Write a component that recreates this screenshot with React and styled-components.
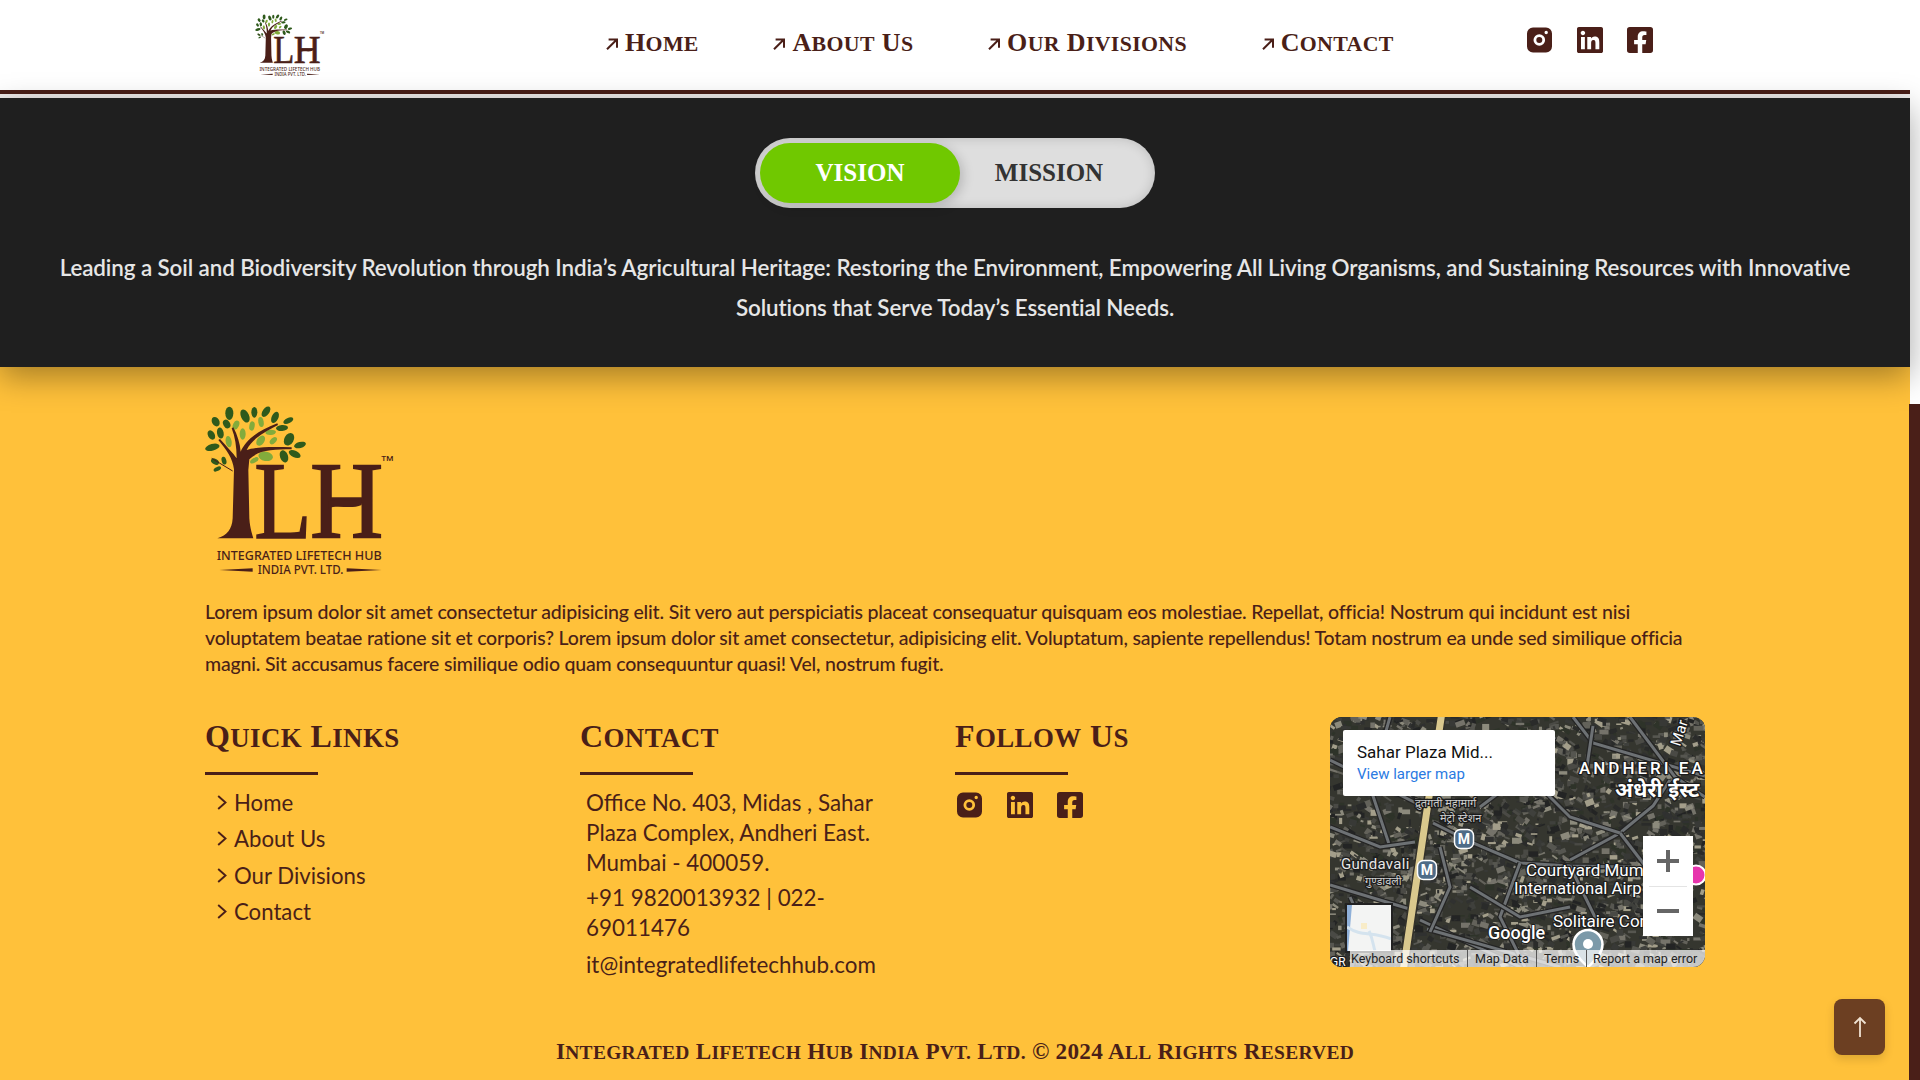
import React from "react";
import styled, { createGlobalStyle } from "styled-components";

const BROWN = "#4a1f18";
const YELLOW = "#ffc13a";
const HEAD = `"Liberation Serif", "Times New Roman", serif`;
const BODY = `Lato, "Noto Sans", sans-serif`;
const ROBOTO = `Roboto, "Liberation Sans", sans-serif`;
const DEVA = `"Noto Sans Devanagari", "Noto Sans", "DejaVu Sans", sans-serif`;

const Global = createGlobalStyle`
  html, body { margin: 0; padding: 0; height: 1080px; overflow: hidden; background: #fff; }
  * { box-sizing: border-box; }
`;

const Page = styled.div`
  position: relative;
  display: flex;
  width: 1920px;
  height: 1080px;
  overflow: hidden;
`;
const Main = styled.div`
  width: 1910px;
  height: 1080px;
  display: flex;
  flex-direction: column;
`;
const Rail = styled.aside`
  position: relative;
  width: 10px;
  background: #fff;
`;
const Thumb = styled.div`
  position: absolute;
  left: -1px;
  right: 0;
  top: 404px;
  bottom: 0;
  background: ${BROWN};
`;
const Header = styled.header`
  display: flex;
  align-items: flex-start;
  flex: none;
  height: 98px;
  padding-left: 255px;
  background: #fff;
  border-bottom: 4px solid #eeeae9;
  box-shadow: inset 0 -4px 0 ${BROWN};
`;
const HeaderLogo = styled.div`
  width: 351px;
  padding-top: 14px;
`;
const Nav = styled.nav`
  display: flex;
  gap: 74.7px;
  width: 921px;
  padding-top: 26px;
`;
const NavItem = styled.a`
  display: flex;
  align-items: center;
  gap: 7px;
  font-family: ${HEAD};
  font-weight: 700;
  font-size: 26px;
  line-height: 34px;
  letter-spacing: 0.35px;
  color: ${BROWN};
`;
const Low = styled.span`
  font-size: 0.84em;
  text-transform: uppercase;
`;
const Socials = styled.div`
  display: flex;
  gap: ${(p) => p.$gap}px;
  color: ${BROWN};
`;
const HeaderSocials = styled(Socials)`
  padding-top: 27px;
`;
const Band = styled.section`
  flex: none;
  height: 269px;
  padding: 40px 50px 0;
  background: #1f1f1f;
  position: relative;
  z-index: 1;
  box-shadow: 0 10px 30px rgba(0, 0, 0, 0.35);
`;
const Toggle = styled.div`
  display: flex;
  align-items: center;
  width: 400px;
  height: 70px;
  margin: 0 auto;
  padding: 5px;
  border-radius: 35px;
  background: #dedede;
  box-shadow: inset 0 0 12px rgba(0, 0, 0, 0.16);
`;
const ToggleOption = styled.div`
  width: ${(p) => (p.$active ? 200 : 178)}px;
  height: 60px;
  border-radius: 30px;
  display: flex;
  align-items: center;
  justify-content: center;
  font-family: ${HEAD};
  font-weight: 700;
  font-size: 25px;
  color: ${(p) => (p.$active ? "#fff" : "#333")};
  background: ${(p) => (p.$active ? "#70c800" : "transparent")};
  box-shadow: ${(p) => (p.$active ? "3px 3px 12px rgba(0,0,0,.18)" : "none")};
`;
const Statement = styled.p`
  margin: 40px 0 0;
  text-align: center;
  font-family: ${BODY};
  font-weight: 600;
  font-size: 22.4px;
  letter-spacing: -0.1px;
  line-height: 40px;
  color: #e6e6e6;
`;
const Footer = styled.footer`
  flex: 1;
  min-height: 0;
  padding: 38px 205px 0;
  background: ${YELLOW};
  color: ${BROWN};
  font-family: ${BODY};
`;
const LogoFrame = styled.div`
  display: block;
  line-height: 0;
`;
const About = styled.p`
  margin: 22px 0 0;
  font-size: 19.5px;
  letter-spacing: -0.19px;
  line-height: 26px;
  font-weight: 500;
`;
const Columns = styled.div`
  display: grid;
  grid-template-columns: repeat(4, 375px);
  margin-top: 40px;
`;
const Column = styled.div`
  min-width: 0;
`;
const ColTitle = styled.h3`
  margin: 0;
  height: 58px;
  font-family: ${HEAD};
  font-weight: 700;
  font-size: 32px;
  line-height: 38px;
  letter-spacing: 0.4px;
  position: relative;
  &::after {
    content: "";
    position: absolute;
    left: 0;
    top: 55px;
    width: 113px;
    height: 3px;
    background: ${BROWN};
  }
`;
const LinkList = styled.ul`
  list-style: none;
  margin: 9px 0 0;
  padding: 0 0 0 12px;
`;
const LinkRow = styled.li`
  display: flex;
  align-items: center;
  gap: 7px;
  height: 36.5px;
  font-size: 22.2px;
`;
const ContactBody = styled.div`
  width: 300px;
  margin: 13px 0 0 6px;
  font-size: 22.4px;
  line-height: 30px;
`;
const ContactPara = styled.p`
  margin: 0 0 ${(p) => p.$gap}px;
`;
const FollowIcons = styled(Socials)`
  margin: 17px 0 0 2px;
`;
const MapBox = styled.div`
  position: relative;
  width: 375px;
  height: 250px;
  overflow: hidden;
  border-radius: 12px;
  background: #3b3b38;
  font-family: ${ROBOTO};
`;
const MapArt = styled.svg`
  display: block;
`;
const InfoCard = styled.div`
  position: absolute;
  left: 13px;
  top: 13px;
  width: 212px;
  height: 66px;
  padding: 12px 0 0 14px;
  background: #fff;
  border-radius: 2px;
`;
const InfoTitle = styled.div`
  font-size: 17px;
  line-height: 21px;
  color: #111;
`;
const InfoLink = styled.div`
  margin-top: 2px;
  font-size: 15px;
  line-height: 18px;
  color: #2a7ae2;
`;
const ZoomCtl = styled.div`
  position: absolute;
  left: 313px;
  top: 119px;
  width: 50px;
  height: 100px;
  background: #fff;
  display: flex;
  flex-direction: column;
`;
const ZoomBtn = styled.div`
  flex: 1;
  display: flex;
  align-items: center;
  justify-content: center;
  & + & {
    position: relative;
    &::before {
      content: "";
      position: absolute;
      top: 0;
      left: 6px;
      right: 6px;
      height: 1px;
      background: #e4e4e4;
    }
  }
`;
const Peg = styled.div`
  position: absolute;
  left: 15px;
  top: 186px;
  width: 48px;
  height: 50px;
  border: 2px solid #222;
  background: #f2f3f2;
  overflow: hidden;
`;
const Attribution = styled.div`
  position: absolute;
  left: 20px;
  right: 0;
  bottom: 0;
  height: 17px;
  display: flex;
  background: rgba(255, 255, 255, 0.72);
  font-size: 12.5px;
  line-height: 17px;
  color: #222;
`;
const AttrCell = styled.span`
  flex: none;
  width: ${(p) => p.$w}px;
  padding-left: ${(p) => p.$pad}px;
  white-space: nowrap;
  overflow: hidden;
  border-right: ${(p) => (p.$last ? "none" : "1px solid #555")};
`;
const Copyright = styled.div`
  margin: 56px -205px 0;
  text-align: center;
  font-family: ${HEAD};
  font-weight: 700;
  font-size: 23.2px;
  line-height: 30px;
  letter-spacing: 0.28px;
`;
const TopButton = styled.button`
  position: absolute;
  left: 1834px;
  top: 999px;
  width: 51px;
  height: 56px;
  padding: 0;
  border: 0;
  border-radius: 8px;
  background: #6c3f22;
  box-shadow: 0 4px 10px rgba(0, 0, 0, 0.14);
  display: flex;
  align-items: center;
  justify-content: center;
`;

/* small caps in the manner of the reference's display face */
const Caps = ({ text }) => (
  <span>
    {text.split(" ").map((word, i) => (
      <React.Fragment key={i}>
        {i > 0 ? " " : ""}
        {/^[A-Za-z]/.test(word) ? (
          <>
            {word[0]}
            <Low>{word.slice(1)}</Low>
          </>
        ) : (
          word
        )}
      </React.Fragment>
    ))}
  </span>
);

/* ---------- icons ---------- */
const Insta = () => (
  <svg width="26" height="26" viewBox="0 0 26 26">
    <path
      fill="currentColor"
      fillRule="evenodd"
      d="M6 0.5h13a6 6 0 0 1 6 6v13a6 6 0 0 1-6 6H6a6 6 0 0 1-6-6v-13a6 6 0 0 1 6-6zM12.3 7.2a5.8 5.8 0 1 0 0 11.6a5.8 5.8 0 1 0 0-11.6zM12.3 10a3 3 0 1 1 0 6a3 3 0 1 1 0-6zM19.2 3.8a1.7 1.7 0 1 0 0 3.4a1.7 1.7 0 1 0 0-3.4z"
    />
  </svg>
);
const Linked = () => (
  <svg width="26" height="26" viewBox="0 32 448 448">
    <path
      fill="currentColor"
      d="M416 32H31.9C14.3 32 0 46.5 0 64.3v383.4C0 465.5 14.3 480 31.9 480H416c17.6 0 32-14.5 32-32.3V64.3c0-17.8-14.4-32.3-32-32.3zM135.4 416H69V202.2h66.5V416zm-33.2-243c-21.3 0-38.5-17.3-38.5-38.5S80.9 96 102.2 96c21.2 0 38.5 17.3 38.5 38.5 0 21.3-17.2 38.5-38.5 38.5zm282.1 243h-66.4V312c0-24.8-.5-56.7-34.5-56.7-34.6 0-39.9 27-39.9 54.9V416h-66.4V202.2h63.7v29.2h.9c8.9-16.8 30.6-34.5 62.9-34.5 67.2 0 79.7 44.3 79.7 101.9V416z"
    />
  </svg>
);
const Face = () => (
  <svg width="26" height="26" viewBox="0 32 448 448">
    <path
      fill="currentColor"
      d="M400 32H48A48 48 0 0 0 0 80v352a48 48 0 0 0 48 48h137.25V327.69h-63V256h63v-54.64c0-62.15 37-96.48 93.67-96.48 27.14 0 55.52 4.84 55.52 4.84v61h-31.27c-30.81 0-40.42 19.12-40.42 38.73V256h68.78l-11 71.69h-57.78V480H400a48 48 0 0 0 48-48V80a48 48 0 0 0-48-48z"
    />
  </svg>
);
const NavArrow = () => (
  <svg width="12" height="12" viewBox="0 0 12 12" fill="none" stroke={BROWN} strokeWidth="2">
    <path d="M1 11.3L10.6 1.7M2.6 1.4h8.4v8.4" />
  </svg>
);
const Chevron = () => (
  <svg width="10" height="15" viewBox="0 0 10 15" fill="none" stroke={BROWN} strokeWidth="1.9">
    <path d="M1.2 1l7.3 6.5L1.2 14" />
  </svg>
);

/* ---------- logo ---------- */
const DARK = [
  [118, 70, 12, 20, 0], [77, 95, 11, 15, -30], [110, 102, 10, 14, -30], [165, 78, 12, 21, -25],
  [193, 67, 9, 16, 0], [228, 65, 10, 18, 35], [255, 82, 10, 18, 25], [295, 92, 8, 16, 65],
  [276, 114, 9, 18, 85], [64, 135, 10, 15, -30], [91, 129, 10, 17, -10], [67, 172, 10, 22, 75],
  [297, 148, 14, 20, 30], [330, 165, 9, 18, 75], [314, 192, 10, 19, 115], [282, 199, 12, 19, -20],
  [75, 215, 8, 13, -60], [102, 212, 7, 12, -15], [82, 237, 6, 12, 65],
];
const LIGHT = [
  [138, 105, 9, 14, 25], [186, 108, 8, 14, 10], [213, 96, 8, 15, -10], [158, 132, 9, 17, 0],
  [116, 155, 9, 17, -10], [242, 127, 8, 16, 85], [212, 152, 11, 17, 35], [250, 152, 8, 13, 45],
  [227, 199, 14, 22, 100], [193, 211, 7, 14, 60],
];
const Leaves = ({ list, color }) =>
  list.map(([cx, cy, rx, ry, a], i) => (
    <ellipse key={i} cx={cx} cy={cy} rx={rx} ry={ry} fill={color} transform={`rotate(${a} ${cx} ${cy})`} />
  ));

const Logo = ({ width, height }) => (
  <svg width={width} height={height} viewBox="45 45 570 516">
    <Leaves list={DARK} color="#2f5a1c" />
    <Leaves list={LIGHT} color="#82ab3c" />
    <path
      fill={BROWN}
      d="M82 445C112 436 126 418 128 385L132 238C128 205 110 180 85 150L90 147C112 172 130 190 140 205C140 170 135 140 125 115L130 112C142 135 150 160 152 185C165 155 195 125 262 100L264 105C215 130 185 150 170 180C195 170 250 170 305 172L305 178C250 178 205 180 178 208L175 240L178 385C180 418 188 436 190 445Z"
    />
    <path stroke={BROWN} strokeWidth="3" fill="none" d="M65 205L128 243" />
    <g stroke={BROWN} strokeWidth="5" fill={BROWN}>
      <text x="193" y="445" textLength="172" lengthAdjust="spacingAndGlyphs" fontFamily={HEAD} fontSize="328">L</text>
      <text x="360" y="445" textLength="220" lengthAdjust="spacingAndGlyphs" fontFamily={HEAD} fontSize="328">H</text>
    </g>
    <path fill={BROWN} d="M415 335C445 322 480 342 515 325V345C480 360 445 342 415 355Z" />
    <text x="574" y="212" textLength="36" lengthAdjust="spacingAndGlyphs" fontFamily={ROBOTO} fontWeight="500" fontSize="22" fill={BROWN}>TM</text>
    <text x="80" y="509" textLength="495" lengthAdjust="spacingAndGlyphs" fontFamily={`"Noto Sans", sans-serif`} fontWeight="500" fontSize="38" fill={BROWN}>INTEGRATED LIFETECH HUB</text>
    <text x="203" y="553" textLength="257" lengthAdjust="spacingAndGlyphs" fontFamily={`"Noto Sans", sans-serif`} fontWeight="500" fontSize="38" fill={BROWN}>INDIA PVT. LTD.</text>
    <path fill={BROWN} d="M88 540L188 535V545ZM575 540L470 535V545Z" />
  </svg>
);

/* ---------- map drawing ---------- */
const mulberry = (seed) => () => {
  seed = (seed + 0x6d2b79f5) | 0;
  let t = Math.imul(seed ^ (seed >>> 15), 1 | seed);
  t = (t + Math.imul(t ^ (t >>> 7), 61 | t)) ^ t;
  return ((t ^ (t >>> 14)) >>> 0) / 4294967296;
};
const TONES = ["#232424", "#2a2b2a", "#303130", "#383936", "#3f403c", "#4a4a45", "#565650", "#63625a", "#75736a", "#8c8a7c", "#2e3329", "#a39e8a"];
const makeBlocks = () => {
  const r = mulberry(4711);
  const out = [];
  for (let i = 0; i < 3200; i++) {
    const w = 2 + r() * 8;
    const h = 1.5 + r() * 5;
    out.push({
      x: r() * 385 - 5,
      y: r() * 260 - 5,
      w,
      h,
      a: [0, 0, 18, -20, 35][Math.floor(r() * 5)],
      c: TONES[Math.floor(r() * TONES.length)],
    });
  }
  return out;
};
const BLOCKS = makeBlocks();
const ROADS = [
  "M103 106L143 126L190 146L240 149L300 150",
  "M0 168L83 193",
  "M90 203L190 250",
  "M97 212L230 250",
  "M240 143L290 116L323 89L340 63",
  "M0 43L100 93",
  "M243 0L263 26L375 59",
  "M290 116L323 159",
  "M263 9L257 49",
  "M150 90L190 60L225 20",
  "M60 0L40 70L60 130",
  "M190 146L170 200L195 250",
  "M300 0L345 60L375 80",
  "M0 110L50 130L85 125",
  "M240 149L265 200L250 235",
  "M110 130L120 170L100 215",
  "M200 60L240 100L290 116",
  "M20 180L45 235",
  "M140 170L190 200L240 190",
];
const LABEL_PROPS = {
  fill: "#fff",
  stroke: "#1c1c1c",
  strokeWidth: 2.6,
  paintOrder: "stroke",
  strokeLinejoin: "round",
};
const MapLabel = ({ x, y, size = 15, weight = 400, family = ROBOTO, spacing, children, ...rest }) => (
  <text x={x} y={y} fontSize={size} fontWeight={weight} fontFamily={family} letterSpacing={spacing} {...LABEL_PROPS} {...rest}>
    {children}
  </text>
);
const Metro = ({ x, y }) => (
  <g transform={`translate(${x - 10} ${y - 10})`}>
    <rect x="0.5" y="0.5" width="19" height="19" rx="6" fill="#4e6b87" stroke="#fff" strokeWidth="1.5" />
    <text x="10" y="15" textAnchor="middle" fontSize="14" fontWeight="700" fontFamily={ROBOTO} fill="#fff">M</text>
  </g>
);
const MapDrawing = () => (
  <MapArt width="375" height="250" viewBox="0 0 375 250">
    <rect width="375" height="250" fill="#35362f" />
    {BLOCKS.map((b, i) => (
      <rect key={i} x={b.x} y={b.y} width={b.w} height={b.h} fill={b.c} transform={`rotate(${b.a} ${b.x} ${b.y})`} />
    ))}
    {ROADS.map((d, i) => (
      <g key={i} fill="none">
        <path d={d} stroke="#242424" strokeWidth="5.5" />
        <path d={d} stroke="#6d7174" strokeWidth="3" />
      </g>
    ))}
    <path d="M112 -5L97 93L73 255" fill="none" stroke="#33312a" strokeWidth="10" />
    <path d="M112 -5L97 93L73 255" fill="none" stroke="#d9c88d" strokeWidth="7" />
    <MapLabel x="249" y="57" size="17" spacing="3" weight="500">ANDHERI EA</MapLabel>
    <MapLabel x="285" y="80" size="21" weight="700" family={DEVA}>अंधेरी ईस्ट</MapLabel>
    <MapLabel x="85" y="90" size="11" family={DEVA} fill="#cfcfcf">द्रुतगती महामार्ग</MapLabel>
    <MapLabel x="110" y="105" size="11" family={DEVA} fill="#cfcfcf">मेट्रो स्टेशन</MapLabel>
    <MapLabel x="11" y="152" size="15" spacing="0.3" fill="#e6e6e6">Gundavali</MapLabel>
    <MapLabel x="35" y="168" size="11" family={DEVA} fill="#cfcfcf">गुण्डावली</MapLabel>
    <MapLabel x="196" y="159" size="17">Courtyard Mum</MapLabel>
    <MapLabel x="184" y="177" size="16.7">International Airp</MapLabel>
    <MapLabel x="223" y="210" size="17">Solitaire Complex</MapLabel>
    <MapLabel x="350" y="30" size="15" transform="rotate(-72 350 30)">Mar</MapLabel>
    <MapLabel x="0" y="249" size="12">GR</MapLabel>
    <MapLabel x="158" y="222" size="18" weight="500" fill="#fff" strokeWidth="2">Google</MapLabel>
    <Metro x={134} y={122} />
    <Metro x={97} y={153} />
    <circle cx="366" cy="158" r="9.5" fill="#e735ad" stroke="#fff" strokeWidth="2" />
    <path d="M258 213a14.5 14.5 0 0 1 14.5 14.5C272.5 238 262 246 258 250C254 246 243.5 238 243.5 227.5A14.5 14.5 0 0 1 258 213z" fill="#7c9aa9" stroke="#fff" strokeWidth="2.5" />
    <circle cx="258" cy="227" r="5" fill="#fff" />
  </MapArt>
);
const PegArt = () => (
  <svg width="44" height="46" viewBox="0 0 44 46">
    <rect width="44" height="46" fill="#f3f4f3" />
    <path d="M5 0L1 46H0V0Z" fill="#8fb0d8" />
    <path d="M0 22C14 32 26 26 44 34" fill="none" stroke="#d4e3ee" strokeWidth="3" />
    <path d="M22 26C26 34 26 40 28 46" fill="none" stroke="#d4e3ee" strokeWidth="3" />
    <rect x="14" y="18" width="6" height="6" fill="#f8ecc8" />
  </svg>
);

/* ---------- data ---------- */
const NAV = ["Home", "About Us", "Our Divisions", "Contact"];
const SocialIcons = ({ gap, as: Box = Socials }) => (
  <Box $gap={gap}>
    <Insta />
    <Linked />
    <Face />
  </Box>
);

export default function App() {
  return (
    <Page>
      <Global />
      <Main>
        <Header>
          <HeaderLogo>
            <Logo width={70} height={63} />
          </HeaderLogo>
          <Nav>
            {NAV.map((n) => (
              <NavItem key={n}>
                <NavArrow />
                <Caps text={n} />
              </NavItem>
            ))}
          </Nav>
          <SocialIcons gap={24} as={HeaderSocials} />
        </Header>
        <Band>
          <Toggle>
            <ToggleOption $active>VISION</ToggleOption>
            <ToggleOption>MISSION</ToggleOption>
          </Toggle>
          <Statement>
            Leading a Soil and Biodiversity Revolution through India’s Agricultural Heritage: Restoring the Environment,
            Empowering All Living Organisms, and Sustaining Resources with Innovative Solutions that Serve Today’s
            Essential Needs.
          </Statement>
        </Band>
        <Footer>
          <LogoFrame>
            <Logo width={190} height={172} />
          </LogoFrame>
          <About>
            Lorem ipsum dolor sit amet consectetur adipisicing elit. Sit vero aut perspiciatis placeat consequatur quisquam
            eos molestiae. Repellat, officia! Nostrum qui incidunt est nisi voluptatem beatae ratione sit et corporis? Lorem
            ipsum dolor sit amet consectetur, adipisicing elit. Voluptatum, sapiente repellendus! Totam nostrum ea unde sed
            similique officia magni. Sit accusamus facere similique odio quam consequuntur quasi! Vel, nostrum fugit.
          </About>
          <Columns>
            <Column>
              <ColTitle><Caps text="Quick Links" /></ColTitle>
              <LinkList>
                {NAV.map((n) => (
                  <LinkRow key={n}>
                    <Chevron />
                    {n}
                  </LinkRow>
                ))}
              </LinkList>
            </Column>
            <Column>
              <ColTitle><Caps text="Contact" /></ColTitle>
              <ContactBody>
                <ContactPara $gap={5}>Office No. 403, Midas , Sahar Plaza Complex, Andheri East. Mumbai - 400059.</ContactPara>
                <ContactPara $gap={7}>+91 9820013932 | 022-69011476</ContactPara>
                <ContactPara $gap={0}>it@integratedlifetechhub.com</ContactPara>
              </ContactBody>
            </Column>
            <Column>
              <ColTitle><Caps text="Follow Us" /></ColTitle>
              <SocialIcons gap={24} as={FollowIcons} />
            </Column>
            <Column>
              <MapBox>
                <MapDrawing />
                <InfoCard>
                  <InfoTitle>Sahar Plaza Mid...</InfoTitle>
                  <InfoLink>View larger map</InfoLink>
                </InfoCard>
                <ZoomCtl>
                  <ZoomBtn>
                    <svg width="22" height="22" viewBox="0 0 22 22"><path d="M9 0h4v9h9v4h-9v9H9v-9H0V9h9z" fill="#666" /></svg>
                  </ZoomBtn>
                  <ZoomBtn>
                    <svg width="22" height="4" viewBox="0 0 22 4"><rect width="22" height="4" fill="#666" /></svg>
                  </ZoomBtn>
                </ZoomCtl>
                <Peg>
                  <PegArt />
                </Peg>
                <Attribution>
                  <AttrCell $w={118} $pad={1}>Keyboard shortcuts</AttrCell>
                  <AttrCell $w={69} $pad={7}>Map Data</AttrCell>
                  <AttrCell $w={50} $pad={7}>Terms</AttrCell>
                  <AttrCell $w={118} $pad={6} $last>Report a map error</AttrCell>
                </Attribution>
              </MapBox>
            </Column>
          </Columns>
          <Copyright><Caps text="Integrated Lifetech Hub India Pvt. Ltd. © 2024 All Rights Reserved" /></Copyright>
        </Footer>
      </Main>
      <Rail>
        <Thumb />
      </Rail>
      <TopButton aria-label="Back to top">
        <svg width="14" height="22" viewBox="0 0 14 22" fill="none" stroke="#f0e2d2" strokeWidth="1.8">
          <path d="M7 21V2M1.5 7.5L7 2l5.5 5.5" />
        </svg>
      </TopButton>
    </Page>
  );
}
